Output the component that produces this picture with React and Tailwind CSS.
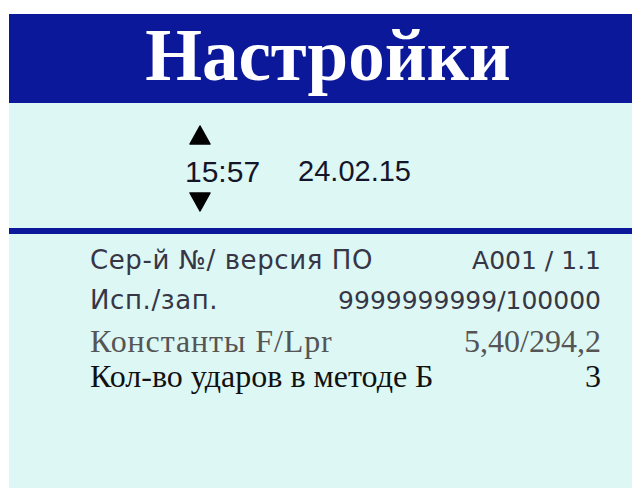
export default function App() {
  const serif = { fontFamily: '"Liberation Serif", "Times New Roman", serif' };
  const sans = { fontFamily: '"DejaVu Sans", Verdana, sans-serif' };
  const timeFont = { fontFamily: '"Liberation Sans", Arial, sans-serif' };

  const Arrow = ({ down }) => (
    <svg width="24" height="20" viewBox="0 0 24 20" className="block">
      {down ? (
        <polygon points="2,1 22,1 12,19" fill="#000" stroke="#000" strokeWidth="1.5" strokeLinejoin="round" />
      ) : (
        <polygon points="12,1 22,19 2,19" fill="#000" stroke="#000" strokeWidth="1.5" strokeLinejoin="round" />
      )}
    </svg>
  );

  return (
    <div className="w-[632px] h-[488px] bg-white pt-[14px] pl-[9px] flex flex-col">
      {/* title bar */}
      <div className="h-[89px] bg-[#0b1899] flex justify-center pt-[5px] pl-[15px]">
        <h1 className="text-[73px] leading-none font-bold text-white" style={serif}>
          Настройки
        </h1>
      </div>

      <div className="flex-1 bg-[#ddf7f4] flex flex-col">
        {/* clock */}
        <div className="h-[125px] pt-[22px] pl-[176px] flex items-start">
          <div className="flex flex-col items-start">
            <div className="ml-[3px]">
              <Arrow />
            </div>
            <div className="mt-[12px] text-[30px] leading-none text-[#15152a] flex" style={timeFont}>
              <span>15:57</span>
              <span className="ml-[38px] text-[29px]">24.02.15</span>
            </div>
            <div className="ml-[3px] mt-[5px]">
              <Arrow down />
            </div>
          </div>
        </div>

        <div className="h-[6px] bg-[#0b1899]" />

        {/* parameters */}
        <div className="pl-[81px] pr-[31px] flex flex-col">
          <div className="mt-[13px] flex justify-between items-baseline leading-none text-[#363646]" style={sans}>
            <span className="text-[26px] tracking-[0.6px]">Сер-й №/ версия ПО</span>
            <span className="text-[25px]">А001 / 1.1</span>
          </div>
          <div className="mt-[14px] flex justify-between items-baseline leading-none text-[#363646]" style={sans}>
            <span className="text-[26px] tracking-[0.6px]">Исп./зап.</span>
            <span className="text-[25px]">9999999999/100000</span>
          </div>
          <div className="mt-[12px] flex justify-between text-[32px] leading-none text-[#555555]" style={serif}>
            <span className="tracking-[0.9px]">Константы F/Lpr</span>
            <span>5,40/294,2</span>
          </div>
          <div className="mt-[3px] flex justify-between text-[32px] leading-none text-[#111111]" style={serif}>
            <span>Кол-во ударов в методе Б</span>
            <span>3</span>
          </div>
        </div>
      </div>
    </div>
  );
}
